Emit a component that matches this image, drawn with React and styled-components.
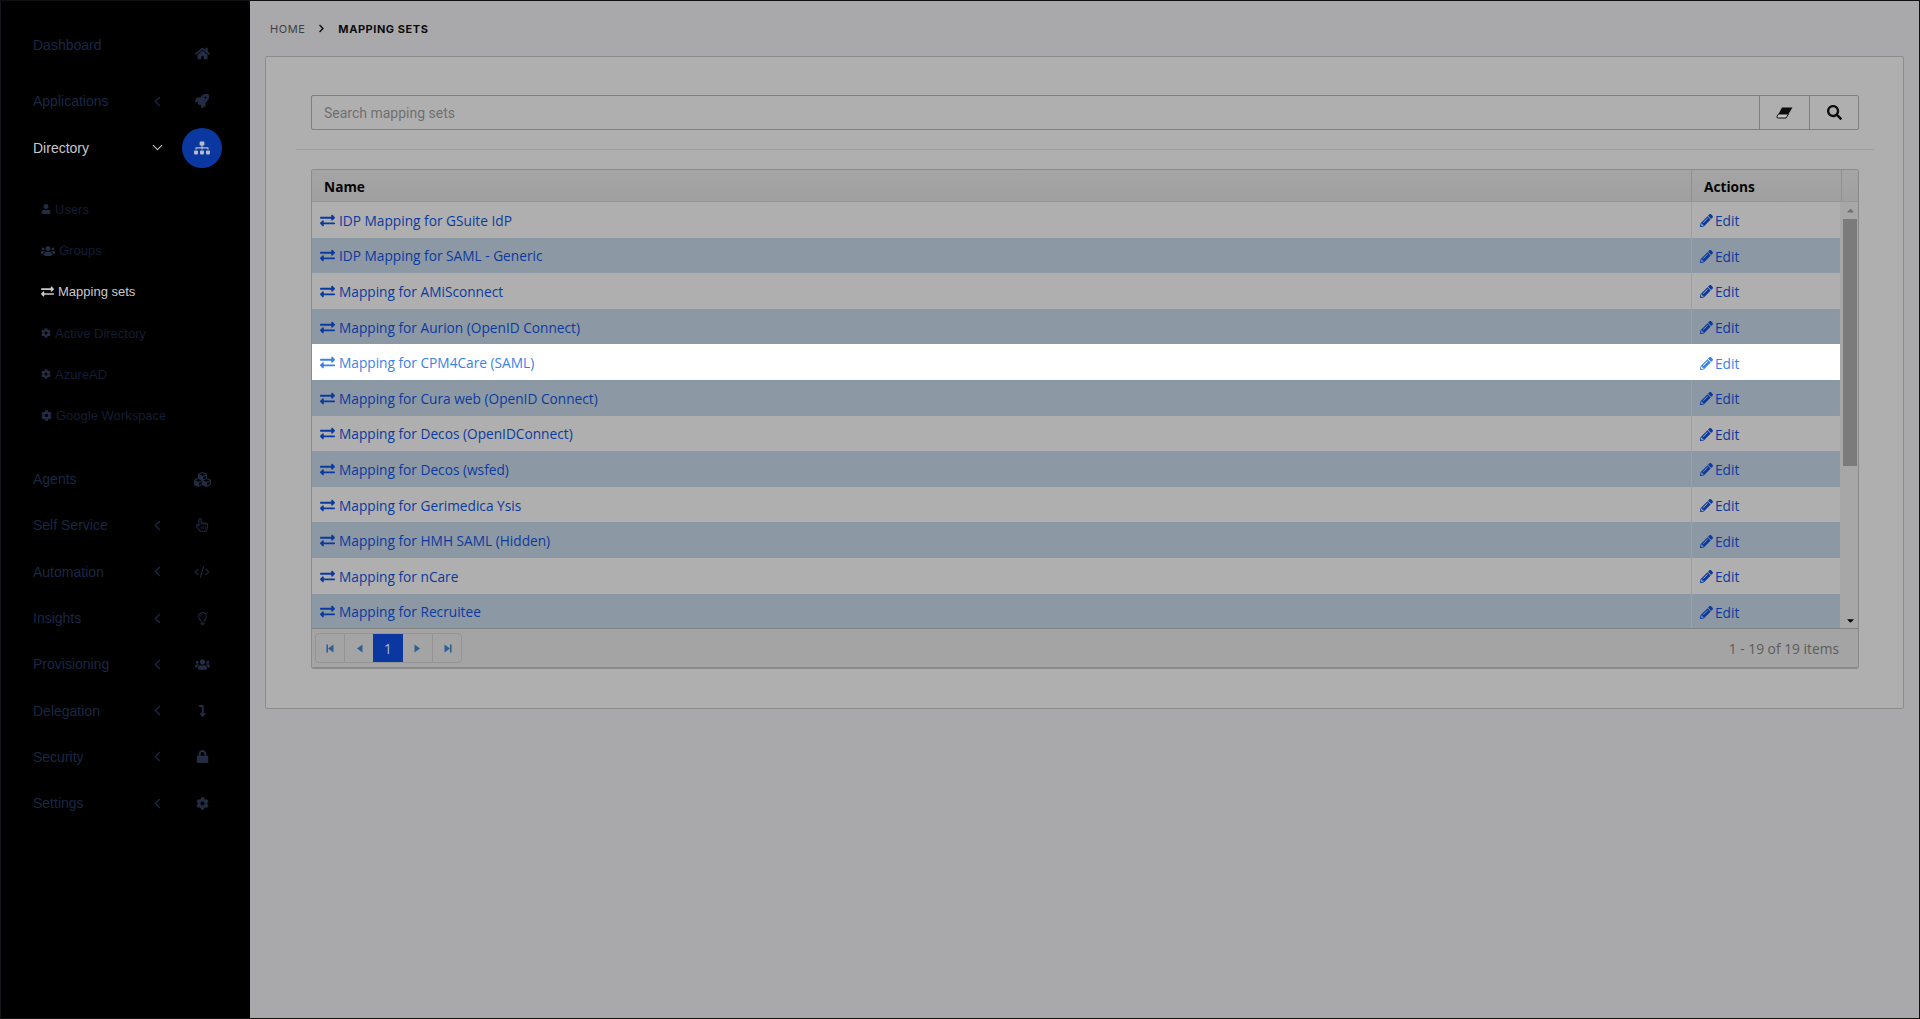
import React from "react";
import styled, { createGlobalStyle } from "styled-components";
import {
  FaHome, FaRocket, FaSitemap, FaUser, FaUsers, FaExchangeAlt, FaCog, FaCubes,
  FaRegHandPointer, FaRegLightbulb, FaLevelDownAlt, FaLock, FaPencilAlt,
  FaSearch, FaChevronRight, FaCaretUp, FaCaretDown,
} from "react-icons/fa";
import { ChevronLeft, ChevronDown, CodeXml } from "lucide-react";

const GlobalStyle = createGlobalStyle`
  html, body { margin: 0; height: 100%; }
  #root { height: 100%; }
  * { box-sizing: border-box; }
`;

// ---------------- Layout ----------------
const Shell = styled.div`
  height: 1019px;
  display: grid;
  grid-template-columns: 250px 1fr;
  background: #a9a9ab;
  border: 1px solid #111;
  border-left: 0;
  overflow: hidden;
`;

const Sidebar = styled.aside`
  background: #000;
  padding-top: 21px;
  font-family: "Liberation Sans", Arial, sans-serif;
  font-size: 14px;
  color: #1a2744;
  border-left: 1px solid #14161c;
`;

const NavRow = styled.div`
  height: 46.3px;
  display: flex;
  align-items: center;
  padding-left: 32px;
  margin-top: ${({ $top }) => $top || 0}px;
  color: ${({ $active }) => ($active ? "#c9c9cb" : "#1a2744")};
`;

const NavLabel = styled.span`
  width: 116px;
`;

const NavChevron = styled.span`
  width: 33px;
  display: flex;
  color: ${({ $active }) => ($active ? "#c9c9cb" : "#1d2a48")};
`;

const NavIcon = styled.span`
  width: 40px;
  height: 40px;
  border-radius: 50%;
  display: flex;
  align-items: center;
  justify-content: center;
  margin-top: ${({ $drop }) => $drop || 0}px;
  color: ${({ $active, $faint }) => ($active ? "#b9bcc4" : $faint ? "#1b2336" : "#232c42")};
  background: ${({ $active }) => ($active ? "#0a38a0" : "transparent")};
`;

const SubList = styled.div`
  padding: 18px 0 20px 40px;
`;

const SubRow = styled.div`
  height: 41.2px;
  display: flex;
  align-items: center;
  gap: 4px;
  font-size: 13px;
  color: ${({ $active }) => ($active ? "#c9c9cb" : "#141d33")};

  svg {
    color: ${({ $active }) => ($active ? "#c9c9cb" : "#232c42")};
  }
`;

const Main = styled.main`
  padding: 0 15px 0 15px;
  font-family: "Open Sans", "Liberation Sans", sans-serif;
  min-width: 0;
`;

const Breadcrumb = styled.nav`
  height: 55px;
  display: flex;
  align-items: center;
  gap: 12px;
  padding: 0 0 0 5px;
  font-family: Inter, "Liberation Sans", sans-serif;
  font-size: 11px;
  letter-spacing: 0.55px;
  color: #3f3f41;
`;

const Crumb = styled.span`
  font-weight: ${({ $current }) => ($current ? 700 : 400)};
  color: ${({ $current }) => ($current ? "#0d0d0f" : "#3f3f41")};
`;

const Card = styled.section`
  height: 653px;
  background: #afafaf;
  border: 1px solid #8c8c8c;
  border-radius: 2px;
  padding: 38px 44px 0 45px;
`;

const SearchBar = styled.div`
  height: 35px;
  display: flex;
  border: 1px solid #808080;
  border-radius: 2px;
`;

const SearchInput = styled.div`
  flex: 1;
  display: flex;
  align-items: center;
  padding-left: 12px;
  font-family: Roboto, "Liberation Sans", sans-serif;
  font-size: 14px;
  color: #6f6f6f;
`;

const SearchButton = styled.div`
  width: ${({ $w }) => $w}px;
  display: flex;
  align-items: center;
  justify-content: center;
  border-left: 1px solid #808080;
  color: #0d0d0f;
  font-size: 15px;
`;

const Rule = styled.hr`
  margin: 19px -15px 19px -15px;
  border: 0;
  border-top: 1px solid #a0a0a0;
`;

const Grid = styled.div`
  height: 500px;
  display: flex;
  flex-direction: column;
  border: 1px solid #8a8a8a;
  border-bottom-width: 2px;
  border-radius: 3px;
  overflow: hidden;
`;

const GridHead = styled.div`
  height: 32px;
  display: grid;
  grid-template-columns: 1fr 150px 17px;
  background: linear-gradient(#a5a5a5, #a0a0a0);
  border-bottom: 1px solid #969696;
  font-weight: 700;
  font-size: 13.7px;
  color: #050505;
`;

const HeadCell = styled.div`
  display: flex;
  align-items: center;
  padding: 1px 0 0 12px;
  border-left: ${({ $rule }) => ($rule ? "1px solid #8f8f8f" : "0")};
`;

const GridBody = styled.div`
  flex: 1;
  display: grid;
  grid-template-columns: 1fr 18px;
  min-height: 0;
`;

const Rows = styled.div`
  min-width: 0;
`;

const Row = styled.div`
  height: 35.6px;
  display: grid;
  grid-template-columns: 1fr 149px;
  align-items: center;
  font-size: 13.7px;
  background: ${({ $focus, $alt }) => ($focus ? "#fff" : $alt ? "#8d98a5" : "#afafaf")};
  color: ${({ $focus }) => ($focus ? "#3a82e8" : "#0b3a9e")};
`;

const NameCell = styled.div`
  display: flex;
  align-items: center;
  gap: 4px;
  padding: 1px 0 0 8px;
`;

const EditCell = styled.div`
  height: 100%;
  display: flex;
  align-items: center;
  gap: 2px;
  padding: 2px 0 0 8px;
  border-left: 1px solid ${({ $focus }) => ($focus ? "#fff" : "#99a0a8")};
`;

const Scrollbar = styled.div`
  display: flex;
  flex-direction: column;
  background: #a7a7a7;
`;

const ScrollArrow = styled.div`
  height: 17px;
  padding-left: 2px;
  display: flex;
  align-items: center;
  justify-content: center;
  font-size: 11px;
  color: ${({ $dim }) => ($dim ? "#707070" : "#050505")};
`;

const ScrollThumb = styled.div`
  height: 247px;
  margin: 0 1px 0 3px;
  background: #7b7b7b;
`;

const ScrollRest = styled.div`
  flex: 1;
`;

const GridFooter = styled.div`
  height: 39px;
  display: flex;
  align-items: center;
  justify-content: space-between;
  padding: 0 19px 0 3px;
  background: #a4a4a4;
  border-top: 1px solid #828282;
  font-size: 13.8px;
  color: #5c5c5c;
`;

const Pager = styled.div`
  display: flex;
  height: 30px;
  border: 1px solid #949494;
  border-radius: 4px;
`;

const PageButton = styled.div`
  width: ${({ $w }) => $w || 29}px;
  display: flex;
  align-items: center;
  justify-content: center;
  color: ${({ $active }) => ($active ? "#a9bad8" : "#2f5f95")};
  background: ${({ $active }) => ($active ? "#0a38a0" : "transparent")};
  border-left: ${({ $rule }) => ($rule ? "1px solid #949494" : "0")};
`;

// ---------------- Data ----------------
const topNav = [
  { label: "Dashboard", icon: FaHome, size: 15, drop: 16 },
  { label: "Applications", icon: FaRocket, size: 14, chevron: true, top: 10 },
];

const subNav = [
  { label: "Users", icon: FaUser, size: 10 },
  { label: "Groups", icon: FaUsers, size: 14 },
  { label: "Mapping sets", icon: FaExchangeAlt, size: 13, active: true },
  { label: "Active Directory", icon: FaCog, size: 10 },
  { label: "AzureAD", icon: FaCog, size: 10 },
  { label: "Google Workspace", icon: FaCog, size: 11 },
];

const bottomNav = [
  { label: "Agents", icon: FaCubes, size: 17 },
  { label: "Self Service", icon: FaRegHandPointer, size: 14, faint: true, chevron: true },
  { label: "Automation", icon: CodeXml, size: 16, faint: true, chevron: true },
  { label: "Insights", icon: FaRegLightbulb, size: 13, faint: true, chevron: true },
  { label: "Provisioning", icon: FaUsers, size: 15, chevron: true },
  { label: "Delegation", icon: FaLevelDownAlt, size: 12, chevron: true },
  { label: "Security", icon: FaLock, size: 13, chevron: true },
  { label: "Settings", icon: FaCog, size: 13, chevron: true },
];

const mappings = [
  "IDP Mapping for GSuite IdP",
  "IDP Mapping for SAML - Generic",
  "Mapping for AMiSconnect",
  "Mapping for Aurion (OpenID Connect)",
  "Mapping for CPM4Care (SAML)",
  "Mapping for Cura web (OpenID Connect)",
  "Mapping for Decos (OpenIDConnect)",
  "Mapping for Decos (wsfed)",
  "Mapping for Gerimedica Ysis",
  "Mapping for HMH SAML (Hidden)",
  "Mapping for nCare",
  "Mapping for Recruitee",
];

const Triangle = ({ flip, bar }) => (
  <svg width="11" height="11" viewBox="0 0 11 11" fill="currentColor" style={flip ? { transform: "scaleX(-1)" } : undefined}>
    <path d="M2.5 1.5 8 5.5 2.5 9.5Z" />
    {bar && <rect x="8" y="1.5" width="1.6" height="8" />}
  </svg>
);

// the old font-awesome eraser: a solid sleeve over a pale tip
const Eraser = () => (
  <svg width="17" height="12" viewBox="0 0 17 12">
    <path d="M6 .5H16.5L12.5 7H2.5Z" fill="#0d0d0f" />
    <path d="M2.5 7H12.5L10 11H2.5Q.2 11 1 9.5Z" fill="#c4c4c4" stroke="#0d0d0f" strokeWidth="1" />
  </svg>
);

function NavItem({ item }) {
  const Icon = item.icon;
  return (
    <NavRow $top={item.top}>
      <NavLabel>{item.label}</NavLabel>
      <NavChevron>{item.chevron && <ChevronLeft size={17} strokeWidth={1.5} />}</NavChevron>
      <NavIcon $drop={item.drop} $faint={item.faint}><Icon size={item.size} /></NavIcon>
    </NavRow>
  );
}

export default function App() {
  return (
    <>
      <GlobalStyle />
      <Shell>
        <Sidebar>
          {topNav.map((item) => <NavItem key={item.label} item={item} />)}
          <NavRow $active>
            <NavLabel>Directory</NavLabel>
            <NavChevron $active><ChevronDown size={17} strokeWidth={1.5} /></NavChevron>
            <NavIcon $active><FaSitemap size={16} /></NavIcon>
          </NavRow>
          <SubList>
            {subNav.map(({ label, icon: Icon, size, active }) => (
              <SubRow key={label} $active={active}><Icon size={size} />{label}</SubRow>
            ))}
          </SubList>
          {bottomNav.map((item) => <NavItem key={item.label} item={item} />)}
        </Sidebar>

        <Main>
          <Breadcrumb>
            <Crumb>HOME</Crumb>
            <FaChevronRight size={9} color="#0d0d0f" />
            <Crumb $current>MAPPING SETS</Crumb>
          </Breadcrumb>
          <Card>
            <SearchBar>
              <SearchInput>Search mapping sets</SearchInput>
              <SearchButton $w={50}><Eraser /></SearchButton>
              <SearchButton $w={49}><FaSearch /></SearchButton>
            </SearchBar>
            <Rule />
            <Grid>
              <GridHead>
                <HeadCell>Name</HeadCell>
                <HeadCell $rule>Actions</HeadCell>
                <HeadCell $rule />
              </GridHead>
              <GridBody>
                <Rows>
                  {mappings.map((name, i) => {
                    const focus = i === 4;
                    return (
                      <Row key={name} $alt={i % 2 === 1} $focus={focus}>
                        <NameCell><FaExchangeAlt size={15} />{name}</NameCell>
                        <EditCell $focus={focus}><FaPencilAlt size={13} />Edit</EditCell>
                      </Row>
                    );
                  })}
                </Rows>
                <Scrollbar>
                  <ScrollArrow $dim><FaCaretUp /></ScrollArrow>
                  <ScrollThumb />
                  <ScrollRest />
                  <ScrollArrow><FaCaretDown /></ScrollArrow>
                </Scrollbar>
              </GridBody>
              <GridFooter>
                <Pager>
                  <PageButton $w={28}><Triangle flip bar /></PageButton>
                  <PageButton $rule><Triangle flip /></PageButton>
                  <PageButton $active $w={30}>1</PageButton>
                  <PageButton><Triangle /></PageButton>
                  <PageButton $rule><Triangle bar /></PageButton>
                </Pager>
                1 - 19 of 19 items
              </GridFooter>
            </Grid>
          </Card>
        </Main>
      </Shell>
    </>
  );
}
